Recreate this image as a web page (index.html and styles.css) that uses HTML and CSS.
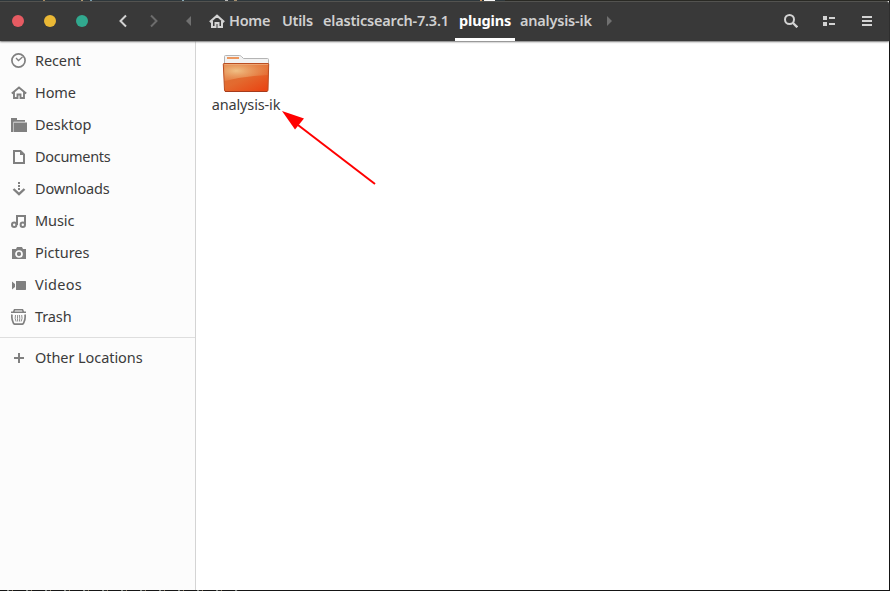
FILE: index.html
```html
<!DOCTYPE html>
<html lang="en">
<head>
<meta charset="utf-8">
<title>plugins</title>
<link rel="stylesheet" href="styles.css">
</head>
<body>
<div class="backdrop-top"></div>
<main class="window">
  <header class="header">
    <div class="controls"><i class="dot close"></i><i class="dot minimize"></i><i class="dot maximize"></i></div>
    <nav class="history">
      <svg width="10" height="14" viewBox="0 0 10 14"><path d="M8 1.500 2.500 7 8 12.500" fill="none" stroke="#d3d3d3" stroke-width="2"/></svg>
      <svg width="10" height="14" viewBox="0 0 10 14"><path d="M2 1.500 7.500 7 2 12.500" fill="none" stroke="#6c6c6c" stroke-width="2"/></svg>
    </nav>
    <nav class="path">
      <svg class="path-prev" width="5" height="10" viewBox="0 0 5 10"><path d="M5 0v10L0 5z" fill="#707070"/></svg>
      <a class="crumb home"><svg width="16" height="14" viewBox="0 0 16 14"><path d="M.8 8 8 1.700 15.200 8M3 7v6h3.500V9h3v4H13V7" fill="none" stroke="#d3d3d3" stroke-width="2"/></svg><span class="t-home">Home</span></a>
      <a class="crumb utils"><span class="t-utils">Utils</span></a>
      <a class="crumb elastic"><span class="t-elastic">elasticsearch-7.3.1</span></a>
      <a class="crumb active"><span class="t-plugins">plugins</span></a>
      <a class="crumb analysis"><span class="t-analysis">analysis-ik</span></a>
      <svg class="path-next" width="5" height="10" viewBox="0 0 5 10"><path d="M0 0v10l5-5z" fill="#707070"/></svg>
    </nav>
    <div class="tools">
      <svg width="14" height="14" viewBox="0 0 14 14" fill="none" stroke="#d3d3d3"><circle cx="5.500" cy="5.500" r="4.500" stroke-width="2"/><path d="m9 9 4.300 4.300" stroke-width="2.300"/></svg>
      <svg width="12" height="10" viewBox="0 0 12 10" fill="#d3d3d3"><path d="M0 0h4v4H0zM6 1h6v2H6zM0 6h4v4H0zM6 7h6v2H6z"/></svg>
      <svg width="10" height="10" viewBox="0 0 10 10" fill="#d3d3d3"><path d="M0 0h10v2H0zM0 4h10v2H0zM0 8h10v2H0z"/></svg>
    </div>
  </header>
  <div class="body">
    <aside class="sidebar">
      <ul class="places">
        <li><svg viewBox="0 0 16 16" fill="none" stroke="#808080"><circle cx="7.500" cy="7.500" r="6.600" stroke-width="1.700"/><path d="m5 5 2.500 2.500 4-3.500" stroke-width="1.300"/></svg><span class="s-recent">Recent</span></li>
        <li><svg viewBox="0 0 16 16" fill="none" stroke="#808080" stroke-width="1.900"><path d="m.8 8.500 7.200-6 7.200 6M3 7v6h3.500V9.500h3v3.500H13V7"/></svg><span class="s-home">Home</span></li>
        <li><svg viewBox="0 0 16 16" fill="#808080"><path d="M0 1h6v2h8v1H2v11H0zM3 5.500h13V15H3zM2 4h12v.8H2zM2 4h.500v11H2z"/></svg><span class="s-desktop">Desktop</span></li>
        <li><svg viewBox="0 0 16 16"><path d="M3 2h6.500L13 5.500V14H3z" fill="none" stroke="#808080" stroke-width="2"/><path d="M9 2v4h4z" fill="#808080"/></svg><span class="s-documents">Documents</span></li>
        <li><svg viewBox="0 0 16 16"><path d="M7 1h2v2H7zM7 4h2v2H7zM7 7h2v2H7z" fill="#808080"/><path d="M2.500 8 8 13.200 13.500 8" fill="none" stroke="#808080" stroke-width="2.400"/></svg><span class="s-downloads">Downloads</span></li>
        <li><svg viewBox="0 0 16 16" fill="none" stroke="#808080" stroke-width="2"><circle cx="3.200" cy="11.800" r="2.200"/><circle cx="11.800" cy="11.800" r="2.200"/><path d="M6 12V3h8v9"/></svg><span class="s-music">Music</span></li>
        <li><svg viewBox="0 0 16 16"><path d="M1 4h4l1-2h5l1 2h3v10H1z" fill="#808080"/><circle cx="8" cy="9" r="3" fill="none" stroke="#fcfcfc" stroke-width="1.700"/></svg><span class="s-pictures">Pictures</span></li>
        <li><svg viewBox="0 0 16 16" fill="#808080"><path d="M1 4.500 4 7v3l-3 2.500zM5 4h9.500l.5.500v8l-.5.500H5z"/></svg><span class="s-videos">Videos</span></li>
        <li><svg viewBox="0 0 16 16" fill="none" stroke="#808080"><path d="M2.500 3 3.500.800h8l1 2.200M0 3.200h15" stroke-width="1.600"/><path d="M1 5.500q-.6 4 1 7.500.5 2.200 2 2.200h7q1.500 0 2-2.200 1.600-3.500 1-7.500" stroke-width="1.700"/><path d="M4.500 6q-1 3.500.6 6.500M6.700 6q-.5 3.500 0 6.500M8.500 6q.5 3.500 0 6.500M10.700 6q1 3.500-.6 6.500" stroke-width=".9"/></svg><span class="s-trash">Trash</span></li>
      </ul>
      <ul class="places other">
        <li><svg viewBox="0 0 16 16" fill="#808080"><path d="M7 3h2v4h4v2H9v4H7V9H3V7h4z"/></svg><span class="s-other">Other Locations</span></li>
      </ul>
    </aside>
    <section class="files">
      <figure class="file">
        <svg width="48" height="40" viewBox="0 0 48 40">
          <defs>
            <linearGradient id="folder" x1="0" y1="0" x2=".8" y2="1"><stop offset="0" stop-color="#dc7138"/><stop offset=".55" stop-color="#e36a2f"/><stop offset="1" stop-color="#e94714"/></linearGradient>
            <radialGradient id="shine" cx=".28" cy=".4" r=".75"><stop offset="0" stop-color="#f0c085"/><stop offset="1" stop-color="#e8955a" stop-opacity=".25"/></radialGradient>
          </defs>
          <path d="M2.500 13V3.500q0-1 1-1h14q1 0 2 1l2 2h24q1 0 1 1V13z" fill="#f2f2f2" stroke="#b4b4b4"/>
          <path d="M5 4h12v2H5z" fill="#ed985f"/>
          <path d="M2 10.500h44q.8 0 .7.800L46 37q0 1.500-1.500 1.500H4Q2.500 38.500 2.500 37L1.300 11.300q0-.8.700-.8z" fill="url(#folder)" stroke="#ba4e22"/>
          <path d="M2 11h44l-.3 11Q24 23 2.600 28z" fill="url(#shine)"/>
          <path d="M2.500 11.500h43.500" stroke="#efb181" stroke-opacity=".7"/>
          <path d="M3 38.500h42" stroke="#a63b1c"/>
        </svg>
        <figcaption><span class="f-name">analysis-ik</span></figcaption>
      </figure>
      <svg class="pointer" width="96" height="76" viewBox="0 0 96 76"><path d="M17 15 94 74" stroke="#f00" stroke-width="2"/><path d="m1 1 22 7.500L14 19.500z" fill="#f00"/></svg>
    </section>
  </div>
</main>
<div class="backdrop-bottom"></div>
</body>
</html>
```

FILE: styles.css
```css
* { box-sizing: border-box; }
body { margin: 0; width: 890px; height: 591px; overflow: hidden; background: #151515; color: #3b3b3b; font: 14.5px/20px "Noto Sans", "Open Sans", sans-serif; }
svg { display: block; flex: none; }
span { white-space: nowrap; padding-bottom: 2px; }
.backdrop-top { height: 1px; background: linear-gradient(90deg, transparent 43px, #aa8b60 43px 45px, transparent 45px 81px, #b49a70 81px 83px, transparent 83px 90px, #7aa0b0 90px 92px, transparent 92px 182px, #8bacb8 182px 184px, transparent 184px 225px, #bbb 225px 228px, transparent 228px 234px, #a99270 234px 237px, transparent 237px 480px, #d99b5d 480px 482px, transparent 482px 484px, #fff 484px 495px, transparent 495px), linear-gradient(90deg, #2b3438 505px, #252520 505px); }
.window { display: flex; flex-direction: column; width: 889px; height: 589px; background: #fff; }
.header { display: flex; flex: none; height: 40px; background: #393939; border-top: 1px solid #535350; border-radius: 0 3px 0 0; color: #d0d0d0; font-weight: 600; position: relative; box-shadow: 0 1px 2px #777; }
.controls { display: flex; align-items: center; gap: 20px; padding-left: 12px; }
.dot { width: 12px; height: 12px; border-radius: 50%; }
.controls, .history, .tools { height: 38px; }
.close { background: #e65b62; }
.minimize { background: #eab835; }
.maximize { background: #31a98f; }
.history { display: flex; align-items: center; gap: 21px; margin-left: 30px; }
.path { display: flex; align-items: center; margin-left: 27px; }
.path > svg { margin-bottom: 1px; }
.crumb { display: flex; align-items: center; height: 39px; padding-bottom: 1px; }
.home { margin-left: 18px; width: 73px; gap: 4px; }
.utils { width: 41px; }
.elastic { width: 132px; }
.active { width: 60px; padding: 2px 0 0 4px; color: #fff; font-weight: 700; border-bottom: 3px solid #fff; }
.analysis { width: 92px; padding-left: 5px; }
.t-home { letter-spacing: -.3px; }
.t-utils { letter-spacing: -.25px; }
.t-elastic { letter-spacing: -.2px; }
.t-plugins { letter-spacing: -.15px; }
.t-analysis { letter-spacing: -.2px; }
.s-recent, .s-home { letter-spacing: -.1px; }
.s-documents { letter-spacing: -.3px; }
.s-downloads { letter-spacing: -.15px; }
.s-music { letter-spacing: -.1px; }
.s-videos { letter-spacing: .3px; }
.s-other { letter-spacing: -.07px; }
.s-trash { letter-spacing: -.1px; }
.tools { display: flex; align-items: center; margin-left: auto; gap: 26px; padding-right: 17px; }
.tools svg:nth-child(2) { margin: 0 1px 0 -2px; }
.tools svg:first-child { margin-right: 1px; }
.body { display: flex; flex: 1; min-height: 0; }
.sidebar { width: 196px; background: #fcfcfc; border-right: 1px solid #d4d4d4; padding-top: 4px; }
.places { list-style: none; margin: 0; padding: 0; }
.places li { display: flex; align-items: center; gap: 8px; height: 32px; padding-left: 11px; }
.places svg { width: 16px; height: 16px; }
.other { border-top: 1px solid #dedede; margin-top: 4px; padding-top: 4px; }
.files { flex: 1; position: relative; padding: 12px 0 0 12px; }
.file { margin: 0; width: 76px; display: flex; flex-direction: column; align-items: center; }
.file figcaption { margin-top: 1px; }
.f-name { letter-spacing: -.15px; }
.pointer { position: absolute; left: 85px; top: 69px; }
.backdrop-bottom { height: 1px; background: repeating-linear-gradient(90deg, #151515 0 7px, #858b86 7px 9px, #242424 9px 12px, #8b7c62 12px 13px, #151515 13px 19px) 0 0 / 238px 1px no-repeat #151515; }
```
